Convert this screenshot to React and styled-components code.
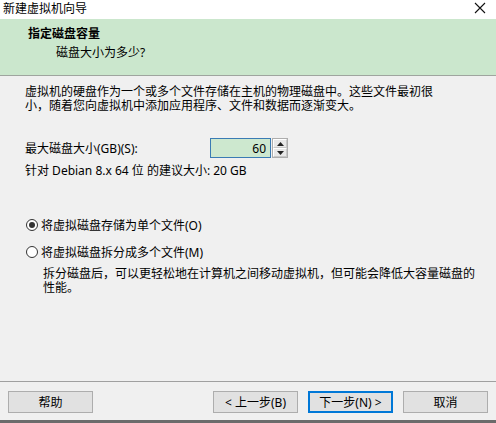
import * as React from "react";
import styled, { createGlobalStyle } from "styled-components";

const GlobalStyle = createGlobalStyle`
  html, body {
    margin: 0;
    padding: 0;
    background: #f0f0f0;
  }
  body {
    font-family: "Noto Sans", "Noto Sans CJK SC", sans-serif;
    font-size: 12px;
    color: #000;
  }
`;

function App() {
  const [single, setSingle] = React.useState(true);
  const [size, setSize] = React.useState(60);

  return (
    <>
      <GlobalStyle />
      <Window>
        <TitleBar>
          <TitleText>新建虚拟机向导</TitleText>
          <CloseButton aria-label="close">
            <svg width="12" height="12" viewBox="0 0 12 12">
              <path d="M1 1L11 11M11 1L1 11" stroke="#111" strokeWidth="1.1" />
            </svg>
          </CloseButton>
        </TitleBar>

        <Header>
          <HeaderTitle>指定磁盘容量</HeaderTitle>
          <HeaderSub>磁盘大小为多少?</HeaderSub>
        </Header>

        <Body>
          <Paragraph>
            虚拟机的硬盘作为一个或多个文件存储在主机的物理磁盘中。这些文件最初很
            <br />
            小，随着您向虚拟机中添加应用程序、文件和数据而逐渐变大。
          </Paragraph>

          <SizeRow>
            <Label>最大磁盘大小(GB)(S):</Label>
            <Spinner>
              <SpinInput
                value={size}
                onChange={(e) => setSize(e.target.value)}
              />
              <SpinButtons>
                <SpinBtn onClick={() => setSize(Number(size) + 1)}>
                  <svg width="7" height="4" viewBox="0 0 7 4">
                    <path d="M0 4L3.5 0L7 4Z" fill="#222" />
                  </svg>
                </SpinBtn>
                <SpinBtn onClick={() => setSize(Number(size) - 1)}>
                  <svg width="7" height="4" viewBox="0 0 7 4">
                    <path d="M0 0L3.5 4L7 0Z" fill="#222" />
                  </svg>
                </SpinBtn>
              </SpinButtons>
            </Spinner>
          </SizeRow>

          <Hint>针对 Debian 8.x 64 位 的建议大小: 20 GB</Hint>

          <Options>
            <RadioRow onClick={() => setSingle(true)}>
              <RadioCircle $checked={single} />
              <span>将虚拟磁盘存储为单个文件(O)</span>
            </RadioRow>
            <RadioRow onClick={() => setSingle(false)}>
              <RadioCircle $checked={!single} />
              <span>将虚拟磁盘拆分成多个文件(M)</span>
            </RadioRow>
            <OptionNote>
              拆分磁盘后，可以更轻松地在计算机之间移动虚拟机，但可能会降低大容量磁盘的
              <br />
              性能。
            </OptionNote>
          </Options>
        </Body>

        <Footer>
          <Button>帮助</Button>
          <Spacer />
          <Button>&lt; 上一步(B)</Button>
          <Button $primary>下一步(N) &gt;</Button>
          <Button>取消</Button>
        </Footer>
        <BottomEdge />
      </Window>
    </>
  );
}

const Window = styled.div`
  width: 496px;
  height: 423px;
  display: flex;
  flex-direction: column;
  background: #f0f0f0;
  overflow: hidden;
`;

const TitleBar = styled.div`
  height: 19px;
  background: #fff;
  display: flex;
  align-items: center;
  justify-content: space-between;
  padding: 0 8px 0 3px;
`;

const TitleText = styled.div`
  font-size: 12px;
  line-height: 19px;
  margin-top: -3px;
`;

const CloseButton = styled.div`
  display: flex;
  align-items: center;
  margin-top: -4px;
  margin-right: 2px;
`;

const Header = styled.div`
  height: 57px;
  box-sizing: border-box;
  background: #cbe7cd;
  border-bottom: 1px solid #9fa59f;
  padding: 7px 0 0 28px;
`;

const HeaderTitle = styled.div`
  font-weight: 700;
  font-size: 12px;
  line-height: 16px;
`;

const HeaderSub = styled.div`
  padding-left: 28px;
  line-height: 16px;
  margin-top: 3px;
`;

const Body = styled.div`
  flex: 1;
  padding: 9px 0 0 25px;
`;

const Paragraph = styled.p`
  margin: 0;
  line-height: 14px;
`;

const SizeRow = styled.div`
  display: flex;
  align-items: center;
  margin-top: 25px;
  height: 20px;
`;

const Label = styled.div`
  width: 185px;
`;

const Spinner = styled.div`
  display: flex;
  align-items: stretch;
  height: 20px;
`;

const SpinInput = styled.input`
  width: 61px;
  box-sizing: border-box;
  border: 1px solid #3a7bb4;
  background: #cde8cf;
  text-align: right;
  font: inherit;
  padding: 0 4px 0 0;
  outline: none;
`;

const SpinButtons = styled.div`
  display: flex;
  flex-direction: column;
  width: 16px;
  margin-left: 1px;
  border: 1px solid #adadad;
  box-sizing: border-box;
  background: #f0f0f0;
`;

const SpinBtn = styled.div`
  flex: 1;
  display: flex;
  align-items: center;
  justify-content: center;
  background: #e8e8e8;
  border: 1px solid #fff;
  border-bottom-color: #c8c8c8;
  border-right-color: #c8c8c8;
  cursor: default;
`;

const Hint = styled.div`
  margin-top: 6px;
  line-height: 14px;
`;

const Options = styled.div`
  margin-top: 40px;
  display: flex;
  flex-direction: column;
`;

const RadioRow = styled.label`
  display: flex;
  align-items: center;
  gap: 3px;
  height: 14px;
  margin-left: 1px;
  margin-bottom: 13px;
  cursor: default;
`;

const RadioCircle = styled.span`
  width: 12px;
  height: 12px;
  box-sizing: border-box;
  border-radius: 50%;
  border: 1px solid #333;
  background: #fff;
  display: inline-flex;
  align-items: center;
  justify-content: center;
  &::after {
    content: "";
    width: 6px;
    height: 6px;
    border-radius: 50%;
    background: ${(p) => (p.$checked ? "#333" : "transparent")};
  }
`;

const OptionNote = styled.div`
  margin: -5px 0 0 18px;
  line-height: 14px;
`;

const Footer = styled.div`
  border-top: 1px solid #a0a0a0;
  height: 39px;
  box-sizing: border-box;
  display: flex;
  align-items: flex-start;
  padding: 9px 8px 0 8px;
  gap: 10px;
`;

const Spacer = styled.div`
  flex: 1;
`;

const Button = styled.button`
  width: 85px;
  height: 22px;
  box-sizing: border-box;
  font: inherit;
  font-size: 12px;
  background: #e1e1e1;
  border: 1px solid ${(p) => (p.$primary ? "#0078d7" : "#adadad")};
  box-shadow: ${(p) => (p.$primary ? "inset 0 0 0 1px #0078d7" : "none")};
  color: #000;
  padding: 0;
  cursor: default;
`;

const BottomEdge = styled.div`
  height: 3px;
  background: #6b6b6b;
`;

export default App;
